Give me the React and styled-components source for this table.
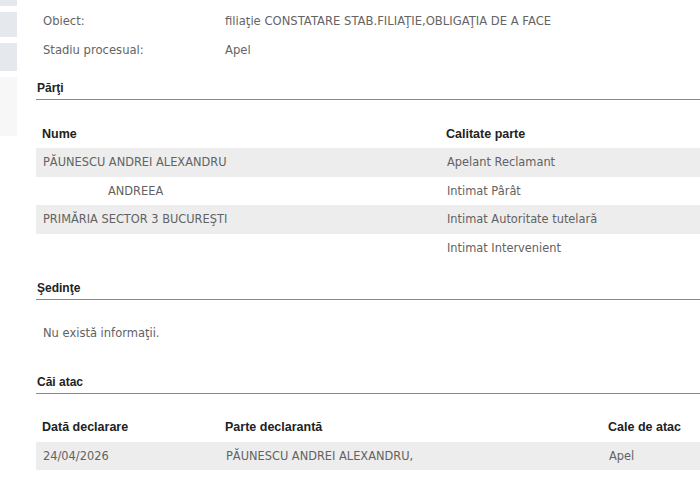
import React from "react";
import styled, { createGlobalStyle } from "styled-components";

const GlobalStyle = createGlobalStyle`
  body {
    margin: 0;
    background: #ffffff;
    overflow: hidden;
    font-family: "DejaVu Sans", Verdana, sans-serif;
  }
`;

const Page = styled.div`
  display: flex;
  align-items: flex-start;
  width: 100%;
`;

const Sidebar = styled.div`
  width: 17px;
  flex-shrink: 0;
  display: flex;
  flex-direction: column;
  gap: 6px;
`;

const SideBlock = styled.div`
  height: ${(p) => p.h}px;
  background: ${(p) => (p.faint ? "#f7f7f8" : "#e5e8ed")};
`;

const Main = styled.div`
  margin-left: 19px;
  flex: 1;
  min-width: 0;
  padding-top: 6px;
`;

const DetailRow = styled.div`
  display: grid;
  grid-template-columns: 182px 1fr;
  height: 29px;
  align-items: center;
  font-size: 11.6px;
  color: #646464;
`;

const DetailLabel = styled.div`
  padding-left: 7px;
`;

const DetailValue = styled.div`
  padding-left: 7px;
  white-space: nowrap;
`;

const SectionTitle = styled.div`
  margin-top: ${(p) => p.mt}px;
  font-family: "Liberation Sans", Arial, sans-serif;
  font-weight: bold;
  font-size: 12px;
  line-height: 16px;
  color: #222;
  padding-left: 1px;
  padding-bottom: 3px;
  border-bottom: 1px solid #8a8a8a;
`;

const Table = styled.div`
  margin-top: 19px;
  display: grid;
  grid-template-columns: ${(p) => p.cols};
`;

const HeadCell = styled.div`
  height: 29px;
  display: flex;
  align-items: center;
  padding-left: 6px;
  font-family: "Liberation Sans", Arial, sans-serif;
  font-weight: bold;
  font-size: 12.5px;
  color: #222;
`;

const Cell = styled.div`
  height: ${(p) => p.h || 28.5}px;
  display: flex;
  align-items: center;
  padding-left: ${(p) => 7 + (p.indent || 0)}px;
  background: ${(p) => (p.shaded ? "#ededed" : "#ffffff")};
  font-size: 11.4px;
  color: #626262;
  white-space: nowrap;
`;

const EmptyText = styled.div`
  margin-top: 19px;
  height: 28px;
  display: flex;
  align-items: center;
  padding-left: 7px;
  font-size: 11.5px;
  color: #626262;
`;

const parti = [
  { nume: "PĂUNESCU ANDREI ALEXANDRU", calitate: "Apelant Reclamant" },
  { nume: "ANDREEA", calitate: "Intimat Pârât", indent: 65 },
  { nume: "PRIMĂRIA SECTOR 3 BUCUREŞTI", calitate: "Intimat Autoritate tutelară" },
  { nume: "", calitate: "Intimat Intervenient" },
];

export default function App() {
  return (
    <>
      <GlobalStyle />
      <Page>
        <Sidebar>
          <SideBlock h={6} />
          <SideBlock h={25} />
          <SideBlock h={28} />
          <SideBlock h={59} faint />
        </Sidebar>
        <Main>
          <DetailRow>
            <DetailLabel>Obiect:</DetailLabel>
            <DetailValue>filiaţie CONSTATARE STAB.FILIAŢIE,OBLIGAŢIA DE A FACE</DetailValue>
          </DetailRow>
          <DetailRow>
            <DetailLabel>Stadiu procesual:</DetailLabel>
            <DetailValue>Apel</DetailValue>
          </DetailRow>

          <SectionTitle mt={16}>Părţi</SectionTitle>
          <Table cols="404px 1fr">
            <HeadCell>Nume</HeadCell>
            <HeadCell>Calitate parte</HeadCell>
            {parti.map((p, i) => (
              <React.Fragment key={i}>
                <Cell shaded={i % 2 === 0} indent={p.indent}>{p.nume}</Cell>
                <Cell shaded={i % 2 === 0}>{p.calitate}</Cell>
              </React.Fragment>
            ))}
          </Table>

          <SectionTitle mt={17.5}>Şedinţe</SectionTitle>
          <EmptyText>Nu există informaţii.</EmptyText>

          <SectionTitle mt={27}>Căi atac</SectionTitle>
          <Table cols="183px 383px 1fr">
            <HeadCell>Dată declarare</HeadCell>
            <HeadCell>Parte declarantă</HeadCell>
            <HeadCell>Cale de atac</HeadCell>
            <Cell shaded h={28}>24/04/2026</Cell>
            <Cell shaded h={28}>PĂUNESCU ANDREI ALEXANDRU,</Cell>
            <Cell shaded h={28}>Apel</Cell>
          </Table>
        </Main>
      </Page>
    </>
  );
}
